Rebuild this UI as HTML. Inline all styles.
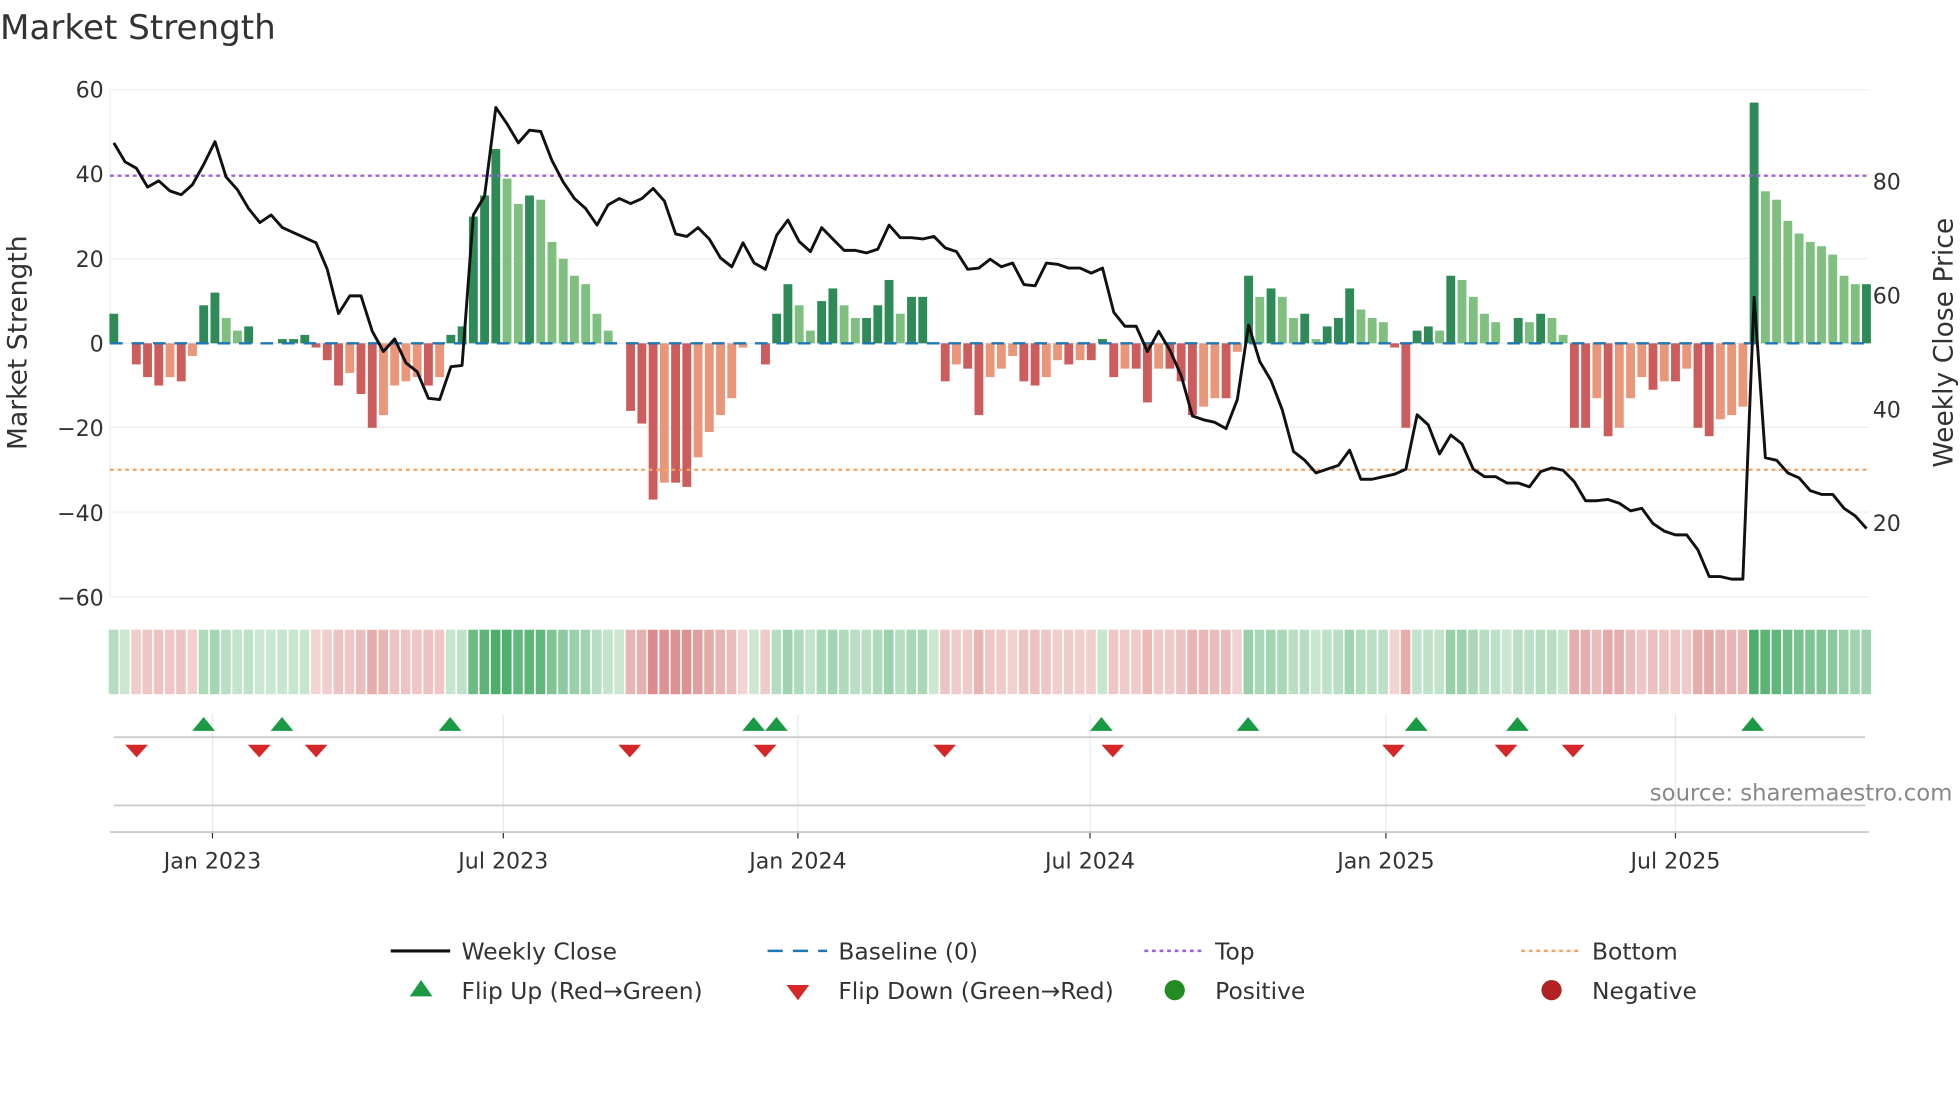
<!DOCTYPE html>
<html><head><meta charset="utf-8"><style>
html,body{margin:0;padding:0;background:#fff;}
svg{display:block;font-family:"DejaVu Sans","Liberation Sans",sans-serif;}
</style></head><body>
<svg id="s" width="1960" height="1102" viewBox="0 0 1550 871.5" xmlns="http://www.w3.org/2000/svg">
<rect width="1550" height="871.5" fill="#fff"/>
<text x="0" y="31" font-size="27" fill="#333">Market Strength</text>
<g id="grid"></g>
<g id="bars"></g>
<g id="lines"></g>
<g id="strip"></g>
<g id="marks"></g>
<g font-size="17.5" fill="#333">
<text x="82" y="77" text-anchor="end">60</text>
<text x="82" y="144" text-anchor="end">40</text>
<text x="82" y="211" text-anchor="end">20</text>
<text x="82" y="278" text-anchor="end">0</text>
<text x="82" y="345" text-anchor="end">−20</text>
<text x="82" y="412" text-anchor="end">−40</text>
<text x="82" y="479" text-anchor="end">−60</text>
<text x="1481" y="150">80</text>
<text x="1481" y="240">60</text>
<text x="1481" y="330">40</text>
<text x="1481" y="420">20</text>
<text x="168" y="687" text-anchor="middle">Jan 2023</text>
<text x="398" y="687" text-anchor="middle">Jul 2023</text>
<text x="631" y="687" text-anchor="middle">Jan 2024</text>
<text x="862" y="687" text-anchor="middle">Jul 2024</text>
<text x="1096" y="687" text-anchor="middle">Jan 2025</text>
<text x="1325" y="687" text-anchor="middle">Jul 2025</text>
</g>
<text transform="translate(21,271) rotate(-90)" font-size="21" fill="#333" text-anchor="middle">Market Strength</text>
<text transform="translate(1544,271) rotate(-90)" font-size="21" fill="#333" text-anchor="middle">Weekly Close Price</text>
<text x="1544" y="633" font-size="18" fill="#888" text-anchor="end">source: sharemaestro.com</text>
<g font-size="18.5" fill="#333">
<line x1="309" y1="752" x2="356" y2="752" stroke="#111" stroke-width="2.5"/>
<text x="365" y="759">Weekly Close</text>
<line x1="607" y1="752" x2="654" y2="752" stroke="#1f77b4" stroke-width="2" stroke-dasharray="12,8"/>
<text x="663" y="759">Baseline (0)</text>
<line x1="905" y1="752" x2="952" y2="752" stroke="#9b5de5" stroke-width="2" stroke-dasharray="3,3"/>
<text x="961" y="759">Top</text>
<line x1="1203" y1="752" x2="1250" y2="752" stroke="#f4a261" stroke-width="2" stroke-dasharray="3,3"/>
<text x="1259" y="759">Bottom</text>
<polygon points="324,788 342,788 333,775" fill="#1a9a45"/>
<text x="365" y="790">Flip Up (Red→Green)</text>
<polygon points="622,779 640,779 631,791" fill="#d62728"/>
<text x="663" y="790">Flip Down (Green→Red)</text>
<circle cx="929" cy="783" r="8" fill="#228b22"/>
<text x="961" y="790">Positive</text>
<circle cx="1227" cy="783" r="8" fill="#b22222"/>
<text x="1259" y="790">Negative</text>
</g>
</svg>
<script>
var NS="http://www.w3.org/2000/svg";
function el(g,t,a){var e=document.createElementNS(NS,t);for(var k in a)e.setAttribute(k,a[k]);document.getElementById(g).appendChild(e);return e;}
var v=[7,0,-5,-8,-10,-8,-9,-3,9,12,6,3,4,0,0,1,1,2,-1,-4,-10,-7,-12,-20,-17,-10,-9,-8,-10,-8,2,4,30,35,46,39,33,35,34,24,20,16,14,7,3,0,-16,-19,-37,-33,-33,-34,-27,-21,-17,-13,-1,0,-5,7,14,9,3,10,13,9,6,6,9,15,7,11,11,0,-9,-5,-6,-17,-8,-6,-3,-9,-10,-8,-4,-5,-4,-4,1,-8,-6,-6,-14,-6,-6,-9,-17,-15,-13,-13,-2,16,11,13,11,6,7,1,4,6,13,8,6,5,-1,-20,3,4,3,16,15,11,7,5,0,6,5,7,6,2,-20,-20,-13,-22,-20,-13,-8,-11,-9,-9,-6,-20,-22,-18,-17,-15,57,36,34,29,26,24,23,21,16,14,14];
var step=8.885,x0=90;
function Y(s){return 271.5-s*3.34;}
// grid
[71,138,204.5,271.5,338,405,472].forEach(function(y){el("grid","line",{x1:87,x2:1478,y1:y,y2:y,stroke:"#eee","stroke-width":1});});
[168,398,631,862,1096,1325].forEach(function(x){el("grid","line",{x1:x,x2:x,y1:565,y2:658,stroke:"#e8e8e8"});el("grid","line",{x1:x,x2:x,y1:658,y2:663,stroke:"#333"});});
el("grid","line",{x1:87,x2:87,y1:71,y2:472,stroke:"#eee"});
el("grid","line",{x1:90,x2:1475,y1:583,y2:583,stroke:"#ccc","stroke-width":1.5});
el("grid","line",{x1:90,x2:1475,y1:637,y2:637,stroke:"#ccc","stroke-width":1.5});
el("grid","line",{x1:87,x2:1478,y1:658,y2:658,stroke:"#ccc","stroke-width":1.5});
var w=7;
for(var i=0;i<v.length;i++){
 var x=x0+i*step,s=v[i],p=i?v[i-1]:0,c;
 if(s>0)c=(s>=p)?"#2e8b57":"#7fbf7f";else if(s<0)c=(s<=p)?"#cd5c5c":"#e9967a";else c=null;
 if(c)el("bars","rect",{x:x-w/2,y:Math.min(Y(s),271.5),width:w,height:Math.abs(Y(s)-271.5),fill:c});
 var m=Math.min(Math.abs(s)/40,1),sc;
 if(s>=0)sc="rgba(46,160,80,"+(0.25+0.6*m)+")";else sc="rgba(205,92,92,"+(0.25+0.5*m)+")";
 el("strip","rect",{x:x-4,y:498,width:7.6,height:51,fill:sc});
}
el("lines","line",{x1:87,x2:1478,y1:271.5,y2:271.5,stroke:"#1f77b4","stroke-width":1.8,"stroke-dasharray":"10,7"});
el("lines","line",{x1:87,x2:1478,y1:139,y2:139,stroke:"#9b5de5","stroke-width":1.8,"stroke-dasharray":"3,3"});
el("lines","line",{x1:87,x2:1478,y1:371.5,y2:371.5,stroke:"#f4a261","stroke-width":1.8,"stroke-dasharray":"3,3"});
var py=[113,128,133,148,143,151,154,146,130,112,140,150,165,176,170,180,184,188,192,213,248,234,234,262,278,268,287,294,315,316,290,289,170,155,85,98,113,103,104,127,144,157,165,178,162,157,161,157,149,159,185,187,180,189,204,211,192,208,213,186,174,191,199,180,189,198,198,200,197,178,188,188,189,187,196,199,213,212,205,211,208,225,226,208,209,212,212,216,212,247,258,258,278,262,277,297,329,332,334,339,316,257,286,301,324,357,364,374,371,368,356,379,379,377,375,371,328,336,359,344,351,371,377,377,382,382,385,373,370,372,381,396,396,395,398,404,402,414,420,423,423,435,456,456,458,458,235,362,364,374,378,388,391,391,402,408,418];
var pts=py.map(function(y,i){return (x0+i*step).toFixed(1)+","+y;}).join(" ");
el("lines","polyline",{points:pts,fill:"none",stroke:"#111","stroke-width":2.3,"stroke-linejoin":"round"});
[161,223,356,596,614,871,987,1120,1200,1386].forEach(function(x){el("marks","polygon",{points:(x-9)+",578 "+(x+9)+",578 "+x+",567",fill:"#1a9a45"});});
[108,205,250,498,605,747,880,1102,1191,1244].forEach(function(x){el("marks","polygon",{points:(x-9)+",589 "+(x+9)+",589 "+x+",599",fill:"#d62728"});});
</script>
</body></html>
